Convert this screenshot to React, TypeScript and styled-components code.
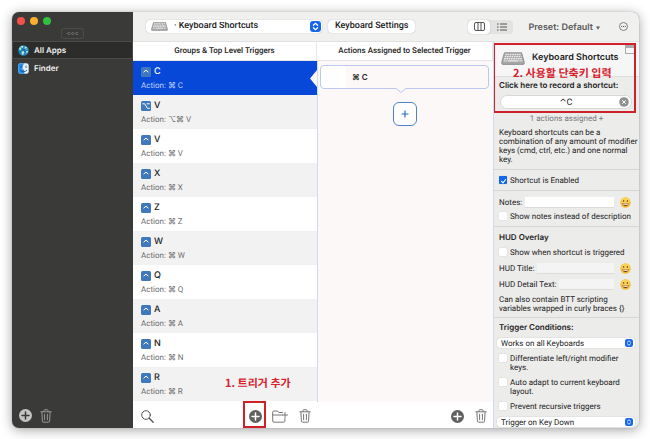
import React from "react";
import styled, { createGlobalStyle, css } from "styled-components";

const GlobalStyle = createGlobalStyle`
  *, *::before, *::after { box-sizing: border-box; }
  body {
    margin: 0;
    background: #fff;
    font-family: Roboto, Inter, "Noto Sans CJK KR", "DejaVu Sans", sans-serif;
    font-size: 8px;
    line-height: 9px;
    color: #222;
    text-rendering: geometricPrecision;
  }
  button, input, select { font: inherit; color: inherit; margin: 0; text-rendering: inherit; }
  button { padding: 0; border: 0; background: none; }
  h1, h2, h3, p, ul { margin: 0; padding: 0; font-size: inherit; }
  ul { list-style: none; }
  svg { display: block; flex: none; }
`;

const strongText = css`
  font-family: Inter, "DejaVu Sans", sans-serif;
  font-weight: 600;
`;

const Desktop = styled.main`
  height: 100vh;
  padding: 12px 11px 11px 12px;
  overflow: hidden;
`;

const Window = styled.div`
  display: grid;
  grid-template-columns: 121px minmax(0, 1fr);
  height: 100%;
  border-radius: 7px;
  overflow: hidden;
  background: #f0f0ef;
  box-shadow: 0 2px 12px rgba(0, 0, 0, 0.36), 0 0 1px rgba(0, 0, 0, 0.4);
`;

/* ---------- sidebar ---------- */

const Sidebar = styled.aside`
  display: flex;
  flex-direction: column;
  background: #3a3a38;
  color: #f2f2f2;
`;

const TitleBar = styled.div`
  display: flex;
  gap: 5px;
  height: 16px;
  padding: 5px 5px 0;
`;

const Light = styled.button<{ $color: string }>`
  width: 8px;
  height: 8px;
  border-radius: 50%;
  background: ${(p) => p.$color};
`;

const CollapseButton = styled.button`
  align-self: center;
  width: 23px;
  height: 11px;
  border: 1px solid #4c4c4a;
  border-radius: 3px;
  color: #80807e;
  line-height: 9px;
`;

const AppList = styled.ul`
  flex: 1;
  padding-top: 2px;
`;

const AppItem = styled.button<{ $selected?: boolean }>`
  ${strongText}
  display: flex;
  align-items: center;
  gap: 5px;
  width: 100%;
  height: 18px;
  padding: 0 5px;
  border: 1px solid ${(p) => (p.$selected ? "#4b4b49" : "transparent")};
  background: ${(p) => (p.$selected ? "#2c2c2b" : "transparent")};
`;

const SidebarFooter = styled.div`
  display: flex;
  align-items: center;
  gap: 7px;
  height: 25px;
  padding: 0 6px;
`;

/* ---------- toolbar ---------- */

const Main = styled.div`
  display: grid;
  grid-template-rows: 30px minmax(0, 1fr);
  min-width: 0;
  min-height: 0;
`;

const Toolbar = styled.header`
  display: flex;
  align-items: center;
  padding: 0 11px 0 13px;
  border-bottom: 1px solid #e2e2e2;
  font-size: 9px;
  font-weight: 500;
`;

const Picker = styled.div<{ $large?: boolean }>`
  position: relative;
  display: flex;
  width: ${(p) => (p.$large ? "176px" : "auto")};
`;

const Select = styled.select<{ $large?: boolean }>`
  appearance: none;
  width: 100%;
  height: ${(p) => (p.$large ? 13 : 10)}px;
  padding: 0 16px 0 ${(p) => (p.$large ? 28 : 4)}px;
  border: 0;
  border-radius: ${(p) => (p.$large ? 4 : 3)}px;
  background: #fff;
  box-shadow: 0 0 1px rgba(0, 0, 0, 0.35);
`;

const PickerIcon = styled.span<{ $side: "left" | "right"; $large?: boolean }>`
  position: absolute;
  inset: 0 auto;
  ${(p) =>
    p.$side === "left"
      ? css`left: 5px;`
      : css`right: ${p.$large ? 1 : 2}px;`}
  display: flex;
  align-items: center;
  pointer-events: none;
`;

const SettingsButton = styled.button`
  height: 13px;
  margin-left: 6px;
  padding: 0 7px;
  border-radius: 4px;
  background: #fff;
  box-shadow: 0 0 1px rgba(0, 0, 0, 0.35);
`;

const Segments = styled.div`
  display: flex;
  margin-left: auto;
  border-radius: 4px;
  background: #e3e3e2;
`;

const Segment = styled.button<{ $on?: boolean }>`
  display: grid;
  place-items: center;
  width: ${(p) => (p.$on ? 22 : 23)}px;
  height: 14px;
  border-radius: 4px;
  ${(p) =>
    p.$on && css`background: #fff; box-shadow: 0 0 1px rgba(0, 0, 0, 0.4);`}
`;

const Preset = styled.button`
  ${strongText}
  display: flex;
  align-items: center;
  gap: 3px;
  margin: 2px 19px 0 15px;
  color: #5a5a5a;
`;

/* ---------- columns ---------- */

const Columns = styled.div`
  display: grid;
  grid-template-columns: minmax(0, 184fr) minmax(0, 176fr) 146px;
  min-height: 0;
`;

const Column = styled.section`
  display: flex;
  flex-direction: column;
  min-height: 0;
  background: #fff;
`;

const ColumnTitle = styled.h2`
  flex: none;
  height: 19px;
  border-right: 1px solid #e6e6e6;
  border-bottom: 1px solid #e6e6e6;
  font-weight: 500;
  line-height: 18px;
  text-align: center;
`;

const TriggerList = styled.ul`
  flex: 1;
  min-height: 0;
  overflow: hidden;
`;

const TriggerItem = styled.li<{ $selected: boolean }>`
  position: relative;
  height: 34px;
  background: ${(p) => (p.$selected ? "#0748d8" : "#fff")};
  color: ${(p) => (p.$selected ? "#fff" : "#222")};
  &:nth-child(even) { background: #f2f2f2; }
`;

const TriggerButton = styled.button`
  display: flex;
  flex-direction: column;
  gap: 4px;
  width: 100%;
  height: 100%;
  padding: 5px 8px 0;
  text-align: left;
`;

const TriggerName = styled.span`
  display: flex;
  align-items: center;
  gap: 3px;
  font-family: Inter, sans-serif;
  font-size: 9px;
  line-height: 11px;
  font-weight: 500;
`;

const TriggerAction = styled.span<{ $selected: boolean }>`
  color: ${(p) => (p.$selected ? "#bfd0f7" : "#6c6c6c")};
`;

const Notch = styled.svg`
  position: absolute;
  right: 0;
  top: 9px;
`;

const Footer = styled.footer`
  display: flex;
  flex: none;
  align-items: center;
  gap: 10px;
  height: 26px;
  padding: 2px 5px 0 8px;
`;

const Spacer = styled.span`
  flex: 1;
`;

const IconButton = styled.button`
  position: relative;
  display: grid;
  place-items: center;
  min-width: 14px;
`;

const RedFrame = styled.span`
  position: absolute;
  border: 2px solid #d0202a;
  pointer-events: none;
`;

const ButtonFrame = styled(RedFrame)`
  inset: -9px -4px -5px -5px;
`;

const RecorderFrame = styled(RedFrame)`
  inset: 1px 3px auto -1px;
  height: 70px;
`;

const RedNote = styled.strong<{ $left: number; $top: number }>`
  position: absolute;
  left: ${(p) => p.$left}px;
  top: ${(p) => p.$top}px;
  color: #d8232c;
  font-family: "Noto Sans CJK KR", sans-serif;
  font-size: 11px;
  font-weight: 700;
  line-height: 14px;
  white-space: nowrap;
  pointer-events: none;
`;

const ActionArea = styled.div`
  display: flex;
  flex: 1;
  flex-direction: column;
  align-items: center;
  gap: 13px;
  padding: 4px 4px 0 2px;
  border-left: 1px solid #d3d8f6;
  background: #fcf8f7;
`;

const ActionCard = styled.button`
  ${strongText}
  position: relative;
  width: 100%;
  height: 24px;
  padding-left: 31px;
  border: 1px solid #bcc8f0;
  border-radius: 4px;
  background: linear-gradient(90deg, #fff 24px, #fcf8f7 25px);
  text-align: left;
`;

const CardTail = styled.svg`
  position: absolute;
  left: calc(50% - 10px);
  top: 21px;
`;

const AddAction = styled.button`
  display: grid;
  place-items: center;
  width: 24px;
  height: 24px;
  border: 1px solid #4f80c8;
  border-radius: 6px;
  background: #fff;
`;

/* ---------- inspector ---------- */

const Inspector = styled.aside`
  position: relative;
  min-height: 0;
  overflow: hidden;
  border-left: 1px solid #d3d8f6;
  background: #ececeb;
`;

const InspectorHead = styled.header`
  display: flex;
  align-items: flex-start;
  gap: 7px;
  height: 35px;
  padding: 10px 4px 0 7px;
  border-bottom: 1px solid #dedede;
  background: #f6f6f7;
`;

const InspectorTitle = styled.h1`
  ${strongText}
  font-size: 9px;
  line-height: 12px;
`;

const CornerIcon = styled.svg`
  position: absolute;
  right: 4px;
  top: 3px;
`;

const Group = styled.section<{ $gap?: number; $pad?: string }>`
  display: flex;
  flex-direction: column;
  gap: ${(p) => p.$gap ?? 6}px;
  padding: ${(p) => p.$pad ?? "6px 5px 5px"};
  border-bottom: 1px solid #d6d6d6;
`;

const GroupTitle = styled.h3`
  ${strongText}
`;

const Recorder = styled.div`
  position: relative;
  display: flex;
  margin: 5px 6px 0 1px;
`;

const RecorderInput = styled.input`
  width: 100%;
  height: 14px;
  border: 1px solid #d8d8d8;
  border-radius: 7px;
  background: #fff;
  font-size: 9px;
  text-align: center;
`;

const ClearButton = styled.button`
  position: absolute;
  right: 3px;
  top: 2px;
`;

const Assigned = styled.p`
  margin: 5px 4px 5px 0;
  color: #777;
  text-align: center;
`;

const CheckLabel = styled.label`
  display: flex;
  align-items: flex-start;
  gap: 3px;
`;

const Check = styled.input`
  appearance: none;
  display: grid;
  place-items: center;
  flex: none;
  width: 8px;
  height: 8px;
  border-radius: 1px;
  background: #fff;
  box-shadow: 0 0 1px rgba(0, 0, 0, 0.3);
  &:checked { background: #1468ec; }
  &:checked::after {
    content: "";
    width: 3px;
    height: 5px;
    border: solid #fff;
    border-width: 0 1px 1px 0;
    transform: rotate(40deg);
  }
`;

const Field = styled.div`
  display: flex;
  align-items: center;
  gap: 3px;
  height: 10px;
  padding-right: 3px;
  white-space: nowrap;
`;

const TextBox = styled.input<{ $dim?: boolean }>`
  flex: 1;
  min-width: 0;
  height: 10px;
  margin-right: 3px;
  padding: 0 2px;
  border: 0;
  background: ${(p) => (p.$dim ? "#f4f4f4" : "#fff")};
  box-shadow: 0 1px 0 #dcdcdc;
`;

/* ---------- drawings ---------- */

const KeyboardIcon = ({ w, h }: { w: number; h: number }) => (
  <svg width={w} height={h} viewBox="0 0 24 13" preserveAspectRatio="none">
    <path d="M3.4.8h17.2l2.6 9.2v1.6c0 .5-.4.8-.9.8H1.700c-.5 0-.9-.3-.9-.8V10z" fill="#a6a6a6" stroke="#858585" strokeWidth=".8" />
    <g stroke="#eee" strokeWidth="1.4" strokeDasharray="1.6 .7">
      <path d="M4.300 2.500h15.500M3.700 4.600h16.800M3.100 6.700h18" />
    </g>
    <path d="M2.600 8.900h3M18.500 8.900h3" stroke="#eee" strokeWidth="1.400" strokeDasharray="1.300 .5" />
    <path d="M6.600 8.900h11" stroke="#eee" strokeWidth="1.400" />
  </svg>
);

const Stepper = ({ size }: { size: number }) => (
  <svg width={size} height={size} viewBox="0 0 11 11">
    <rect width="11" height="11" rx="3" fill="#1768ea" />
    <path d="M3.400 4.300 5.500 2.300l2.100 2M3.400 6.700l2.100 2 2.100-2" fill="none" stroke="#fff" strokeWidth="1.200" strokeLinecap="round" strokeLinejoin="round" />
  </svg>
);

const PlusCircle = ({ fill, mark }: { fill: string; mark: string }) => (
  <svg width="13" height="13" viewBox="0 0 13 13">
    <circle cx="6.500" cy="6.500" r="6.500" fill={fill} />
    <path d="M6.500 3v7M3 6.500h7" stroke={mark} strokeWidth="1.500" strokeLinecap="round" />
  </svg>
);

const Trash = ({ color }: { color: string }) => (
  <svg width="12" height="14" viewBox="0 0 12 14" fill="none" stroke={color} strokeLinecap="round" strokeLinejoin="round">
    <path d="M.8 2.800h10.400M4 2.600V1.500C4 1 4.300.7 4.800.7h2.400c.5 0 .8.3.8.8v1.100M1.900 3l.5 9c0 .8.500 1.200 1.200 1.200h4.800c.7 0 1.200-.4 1.200-1.200l.5-9" />
    <path d="M4.600 5.200v5.600M7.400 5.200v5.600" />
  </svg>
);

const FolderPlus = () => (
  <svg width="16" height="13" viewBox="0 0 16 13" fill="none" stroke="#777" strokeLinecap="round" strokeLinejoin="round">
    <path d="M10.500 2.500H6.800L5.600 1H1.800C1.200 1 .7 1.400.7 2v9c0 .7.4 1.200 1.200 1.200h9.800c.8 0 1.200-.5 1.200-1.200V8.500M.8 5h9.500M13 2.500v5M10.500 5h5" />
  </svg>
);

const Magnifier = () => (
  <svg width="13" height="13" viewBox="0 0 13 13" fill="none" stroke="#555" strokeLinecap="round">
    <circle cx="5" cy="5" r="4.300" />
    <path d="m8.200 8.200 4 4" strokeWidth="1.300" />
  </svg>
);

const Globe = () => (
  <svg width="11" height="11" viewBox="0 0 11 11">
    <circle cx="5.500" cy="5.500" r="5.300" fill="#2384bd" />
    <path d="M1 3.200 3.500.8l2 .3-.6 1.700-1.700.7L3 5.300 1.500 5zM6.800 1.300l2 1 .9 2-1.700.5L6.500 3.500zM3.600 5.500l2.300.7.5 1.500L5 10.200 3.600 9zM8 6.200l2-.4-.6 2.400-1.500.8z" fill="#a8e3da" />
    <path d="M1.500 7.500C4 6 8 3.500 9.500 3M2.500 2c2 2 5 5 6.500 7" stroke="#145b92" strokeWidth=".6" fill="none" />
  </svg>
);

const Finder = () => (
  <svg width="11" height="11" viewBox="0 0 11 11">
    <rect x=".3" y=".3" width="10.400" height="10.400" rx="2.300" fill="#e6effa" />
    <path d="M6.200.3H2.600A2.300 2.300 0 0 0 .3 2.600v5.800a2.300 2.300 0 0 0 2.300 2.300h4C6.100 9.300 6 8 6 6.600H4.500C4.500 4 5 2 6.200.3z" fill="#2591ee" />
    <path d="M3 3.200v1.200M8 3.200v1.200M2.300 7.500c1.800 1.700 4.600 1.700 6.400 0" stroke="#154575" strokeWidth=".8" strokeLinecap="round" fill="none" />
  </svg>
);

const KeyBadge = ({ option }: { option?: boolean }) => (
  <svg width="10" height="10" viewBox="0 0 10 10">
    <rect width="10" height="10" rx="1.500" fill="#3f78bd" />
    <path
      d={option ? "M1.700 2.800h2l2.700 4.500h2M6 2.800h2.400" : "M2.900 4.900 5 3.200l2.100 1.700"}
      fill="none" stroke="#fff" strokeWidth="1" strokeLinecap="round" strokeLinejoin="round"
    />
  </svg>
);

const Smiley = () => (
  <svg width="11" height="11" viewBox="0 0 11 11">
    <circle cx="5.500" cy="5.500" r="5.200" fill="#f7bd35" />
    <circle cx="5.500" cy="4.400" r="3.900" fill="#fbd253" />
    <ellipse cx="3.700" cy="4" rx=".6" ry=".9" fill="#6b4216" />
    <ellipse cx="7.300" cy="4" rx=".6" ry=".9" fill="#6b4216" />
    <path d="M2.200 6.100c1.800.5 4.800.5 6.600 0-.2 2-1.500 3.200-3.300 3.200S2.400 8.100 2.200 6.100z" fill="#8a4a1c" />
    <path d="M2.700 6.400c1.600.4 4 .4 5.600 0l-.3 1c-1.500.3-3.500.3-5 0z" fill="#fff" />
  </svg>
);

/* ---------- data ---------- */

const triggers = [
  { key: "C", action: "⌘ C" },
  { key: "V", action: "⌥⌘ V", option: true },
  { key: "V", action: "⌘ V" },
  { key: "X", action: "⌘ X" },
  { key: "Z", action: "⌘ Z" },
  { key: "W", action: "⌘ W" },
  { key: "Q", action: "⌘ Q" },
  { key: "A", action: "⌘ A" },
  { key: "N", action: "⌘ N" },
  { key: "R", action: "⌘ R" },
];

const CheckRow = ({ text, checked }: { text: string; checked?: boolean }) => (
  <CheckLabel>
    <Check type="checkbox" defaultChecked={checked} />
    <span>{text}</span>
  </CheckLabel>
);

const EmojiField = ({ id, label, dim }: { id: string; label: string; dim?: boolean }) => (
  <Field>
    <label htmlFor={id}>{label}</label>
    <TextBox id={id} type="text" $dim={dim} />
    <button type="button" aria-label="Insert emoji"><Smiley /></button>
  </Field>
);

const SmallPicker = ({ label, value }: { label: string; value: string }) => (
  <Picker>
    <Select aria-label={label}><option>{value}</option></Select>
    <PickerIcon $side="right"><Stepper size={8} /></PickerIcon>
  </Picker>
);

const ConditionsGroup = styled(Group)`
  padding: 5px 4px 0 3px;
  border-bottom: 0;
  & > ${GroupTitle}, & > ${CheckLabel} { margin-left: 2px; }
`;

export default function App() {
  return (
    <Desktop>
      <GlobalStyle />
      <Window>
        <Sidebar>
          <TitleBar>
            <Light $color="#f5504a" aria-label="Close" />
            <Light $color="#f6b02c" aria-label="Minimize" />
            <Light $color="#32c13c" aria-label="Zoom" />
          </TitleBar>
          <CollapseButton type="button">&lt;&lt;&lt;</CollapseButton>
          <AppList>
            <li><AppItem $selected><Globe />All Apps</AppItem></li>
            <li><AppItem><Finder />Finder</AppItem></li>
          </AppList>
          <SidebarFooter>
            <IconButton aria-label="Add app"><PlusCircle fill="#c4c4c2" mark="#3a3a38" /></IconButton>
            <IconButton aria-label="Delete app"><Trash color="#989896" /></IconButton>
          </SidebarFooter>
        </Sidebar>

        <Main>
          <Toolbar>
            <Picker $large>
              <Select $large aria-label="Trigger type"><option>· Keyboard Shortcuts</option></Select>
              <PickerIcon $side="left"><KeyboardIcon w={17} h={9} /></PickerIcon>
              <PickerIcon $side="right" $large><Stepper size={11} /></PickerIcon>
            </Picker>
            <SettingsButton type="button">Keyboard Settings</SettingsButton>
            <Segments>
              <Segment $on aria-label="Column view">
                <svg width="11" height="9" viewBox="0 0 11 9" fill="none" stroke="#555">
                  <rect x=".5" y=".5" width="10" height="8" rx="1.500" />
                  <path d="M4 .5v8M7 .5v8" />
                </svg>
              </Segment>
              <Segment aria-label="List view">
                <svg width="10" height="8" viewBox="0 0 10 8" stroke="#555">
                  <path d="M0 1h1.500M3 1h7M0 4h1.500M3 4h7M0 7h1.500M3 7h7" />
                </svg>
              </Segment>
            </Segments>
            <Preset type="button">
              Preset: Default
              <svg width="4" height="4" viewBox="0 0 4 4"><path d="M0 .5h4L2 3.800z" fill="#5a5a5a" /></svg>
            </Preset>
            <button type="button" aria-label="More">
              <svg width="9" height="9" viewBox="0 0 9 9">
                <circle cx="4.500" cy="4.500" r="4" fill="none" stroke="#666" strokeWidth=".8" />
                <path d="M2.200 4.500h1M4 4.500h1M5.800 4.500h1" stroke="#555" />
              </svg>
            </button>
          </Toolbar>

          <Columns>
            <Column>
              <ColumnTitle>Groups &amp; Top Level Triggers</ColumnTitle>
              <TriggerList>
                {triggers.map((t, i) => (
                  <TriggerItem key={i} $selected={i === 0}>
                    <TriggerButton type="button">
                      <TriggerName><KeyBadge option={t.option} />{t.key}</TriggerName>
                      <TriggerAction $selected={i === 0}>Action: {t.action}</TriggerAction>
                    </TriggerButton>
                    {i === 0 && (
                      <Notch width="7" height="17" viewBox="0 0 7 17"><path d="M7 0v17L0 8.500z" fill="#fcf8f7" /></Notch>
                    )}
                    {i === triggers.length - 1 && <RedNote $left={92} $top={9}>1. 트리거 추가</RedNote>}
                  </TriggerItem>
                ))}
              </TriggerList>
              <Footer>
                <button type="button" aria-label="Search"><Magnifier /></button>
                <Spacer />
                <IconButton aria-label="Add trigger">
                  <PlusCircle fill="#606060" mark="#fff" />
                  <ButtonFrame />
                </IconButton>
                <IconButton aria-label="Add group"><FolderPlus /></IconButton>
                <IconButton aria-label="Delete trigger"><Trash color="#777" /></IconButton>
              </Footer>
            </Column>

            <Column>
              <ColumnTitle>Actions Assigned to Selected Trigger</ColumnTitle>
              <ActionArea>
                <ActionCard type="button">
                  ⌘ C
                  <CardTail width="12" height="6" viewBox="0 0 12 6">
                    <path d="M0 0h12v1.500H11L6 5.500 1 1.500H0z" fill="#fcf8f7" />
                    <path d="M0 1.500h1l5 4 5-4h1" fill="none" stroke="#bcc8f0" />
                  </CardTail>
                </ActionCard>
                <AddAction aria-label="Add action">
                  <svg width="8" height="8" viewBox="0 0 8 8"><path d="M4 .5v7M.5 4h7" stroke="#2f6dc4" strokeWidth="1.200" /></svg>
                </AddAction>
              </ActionArea>
              <Footer>
                <Spacer />
                <IconButton aria-label="Add action below"><PlusCircle fill="#606060" mark="#fff" /></IconButton>
                <IconButton aria-label="Delete action"><Trash color="#777" /></IconButton>
              </Footer>
            </Column>

            <Inspector>
              <InspectorHead>
                <KeyboardIcon w={24} h={13} />
                <InspectorTitle>Keyboard Shortcuts</InspectorTitle>
                <CornerIcon width="10" height="9" viewBox="0 0 10 9">
                  <rect x=".5" y=".5" width="9" height="8" fill="#f6f6f7" stroke="#aaa" />
                  <path d="M.5 2h9" stroke="#aaa" strokeWidth="2" />
                </CornerIcon>
              </InspectorHead>
              <Group $gap={0} $pad="4px 1px 5px 5px">
                <GroupTitle as="label" htmlFor="recorder">Click here to record a shortcut:</GroupTitle>
                <Recorder>
                  <RecorderInput id="recorder" defaultValue="⌃C" />
                  <ClearButton aria-label="Clear shortcut">
                    <svg width="10" height="10" viewBox="0 0 10 10">
                      <circle cx="5" cy="5" r="4.800" fill="#909090" />
                      <path d="m3.200 3.200 3.600 3.600M6.800 3.200 3.200 6.800" stroke="#fff" />
                    </svg>
                  </ClearButton>
                </Recorder>
                <Assigned>1 actions assigned +</Assigned>
                <p>Keyboard shortcuts can be a combination of any amount of modifier keys (cmd, ctrl, etc.) and one normal key.</p>
              </Group>
              <Group><CheckRow text="Shortcut is Enabled" checked /></Group>
              <Group $gap={5}>
                <EmojiField id="notes" label="Notes:" />
                <CheckRow text="Show notes instead of description" />
              </Group>
              <Group $pad="6px 5px 4px">
                <GroupTitle>HUD Overlay</GroupTitle>
                <CheckRow text="Show when shortcut is triggered" />
                <EmojiField id="hud-title" label="HUD Title:" dim />
                <EmojiField id="hud-detail" label="HUD Detail Text:" dim />
                <p>Can also contain BTT scripting variables wrapped in curly braces {"{}"}</p>
              </Group>
              <ConditionsGroup>
                <GroupTitle>Trigger Conditions:</GroupTitle>
                <SmallPicker label="Keyboards" value="Works on all Keyboards" />
                <CheckRow text="Differentiate left/right modifier keys." />
                <CheckRow text="Auto adapt to current keyboard layout." />
                <CheckRow text="Prevent recursive triggers" />
                <SmallPicker label="Trigger moment" value="Trigger on Key Down" />
              </ConditionsGroup>
              <RecorderFrame />
              <RedNote $left={19} $top={24}>2. 사용할 단축키 입력</RedNote>
            </Inspector>
          </Columns>
        </Main>
      </Window>
    </Desktop>
  );
}
